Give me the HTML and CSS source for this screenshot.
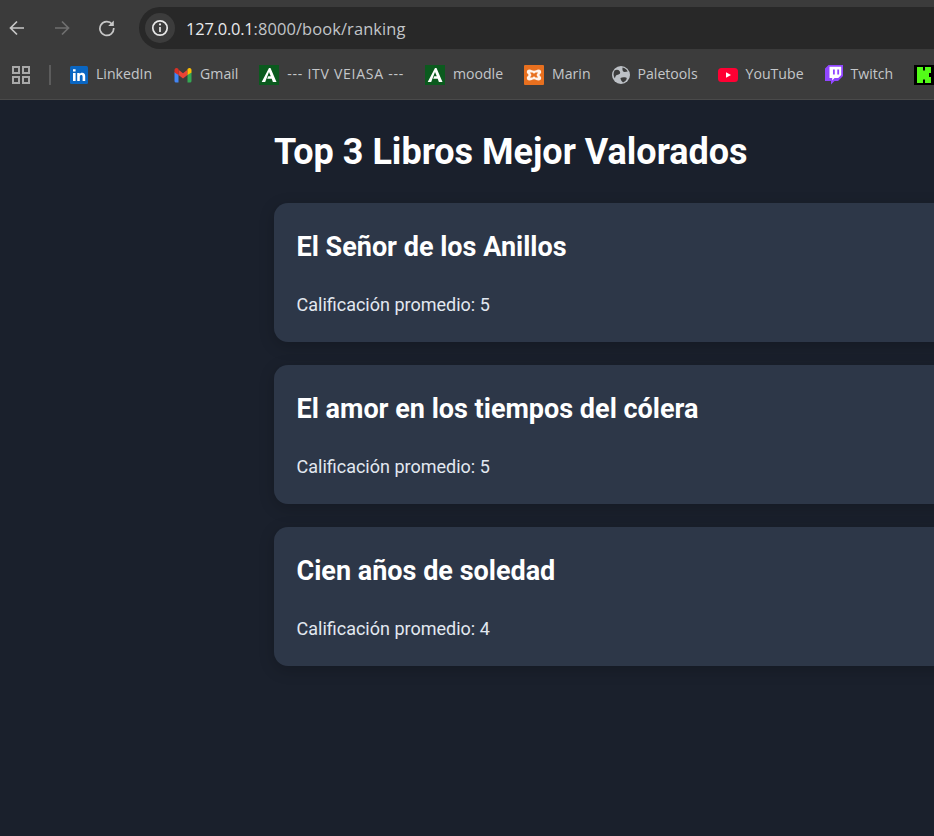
FILE: index.html
```html
<!DOCTYPE html>
<html lang="es">
<head>
<meta charset="utf-8">
<title>Top 3 Libros Mejor Valorados</title>
<link rel="stylesheet" href="styles.css">
</head>
<body>
<header class="chrome">
  <div class="toolbar">
    <svg class="nav-icon" viewBox="0 0 18 18"><path d="M16 9H3M9 2.500 2.500 9 9 15.500" class="stroke light"/></svg>
    <svg class="nav-icon dim" viewBox="0 0 18 18"><path d="M2 9h13M9 2.500 15.500 9 9 15.500" class="stroke muted"/></svg>
    <svg class="nav-icon reload" viewBox="0 0 18 18"><path d="M14.200 5.200A6.900 6.900 0 1 0 15.700 9" class="stroke light"/><path d="M15.800 1.400v5.600h-5.600z" class="fill-light"/></svg>
    <div class="omnibox">
      <span class="site-info"><svg viewBox="0 0 18 18" class="info"><circle cx="9" cy="9" r="7.200" class="stroke white"/><path d="M9 8v5" class="stroke white"/><circle cx="9" cy="5.400" r="1.100" class="fill-white"/></svg></span>
      <span class="url"><span class="host">127.0.0.1</span>:8000/book/ranking</span>
    </div>
  </div>
  <nav class="bookmarks">
    <svg class="apps" viewBox="0 0 18 18"><path d="M1 1h6v6H1zM11 1h6v6h-6zM1 11h6v6H1zM11 11h6v6h-6z" class="stroke apps-line"/></svg>
    <span class="divider"></span>
    <a class="bm bm-linkedin"><svg viewBox="0 0 18 18"><rect width="18" height="18" rx="1.500" fill="#0a66c2"/><path d="M3 7h2.600v8H3zM3 3.200h2.600v2.400H3zM7.200 7h2.500v1.100c.5-.8 1.400-1.300 2.500-1.300 2 0 3 1.200 3 3.400V15h-2.600v-4.300c0-1.100-.4-1.700-1.300-1.700s-1.500.6-1.500 1.700V15H7.200z" fill="#fff"/></svg><span class="bm-label">LinkedIn</span></a>
    <a class="bm bm-gmail"><svg viewBox="0 0 18 18"><path d="M.5 6 4.500 8v8.500H2a1.500 1.500 0 0 1-1.500-1.500z" fill="#4285f4"/><path d="M13.500 8l4-2v9a1.500 1.500 0 0 1-1.500 1.500h-2.500z" fill="#34a853"/><path d="M4.500 9V3.800L9 7.200l4.500-3.400V9L9 12.400z" fill="#ea4335"/><path d="M.5 6.500V4c0-1.700 1.900-2.600 3.200-1.600l.8.600V9z" fill="#d93025"/><path d="M13.500 9V3l.8-.6c1.300-1 3.200-.1 3.200 1.600v2.500z" fill="#fbbc04"/></svg><span class="bm-label">Gmail</span></a>
    <a class="bm bm-itv"><svg viewBox="0 0 20 20"><rect width="20" height="20" fill="#0b5a1e"/><path d="M10 3h1.500L17.500 17h-3.600l-1.200-3.200H8.200l1-2.500h2.600L10 7 6.200 17H2.700z" fill="#fff"/></svg><span class="bm-label">--- ITV VEIASA ---</span></a>
    <a class="bm bm-moodle"><svg viewBox="0 0 20 20"><rect width="20" height="20" fill="#0b5a1e"/><path d="M10 3h1.500L17.500 17h-3.600l-1.200-3.200H8.200l1-2.500h2.600L10 7 6.200 17H2.700z" fill="#fff"/></svg><span class="bm-label">moodle</span></a>
    <a class="bm bm-marin"><svg viewBox="0 0 20 20"><rect width="20" height="20" rx="1" fill="#e8701f"/><path d="M5.500 4.500c2 0 2.500 1.300 4.500 1.300s2.500-1.300 4.500-1.300 2.700 1.300 2.700 2.700-1.700 1.700-1.700 2.800 1.700 1.400 1.700 2.800-.7 2.700-2.700 2.700-2.500-1.300-4.500-1.300-2.500 1.300-4.500 1.300-2.700-1.300-2.700-2.700 1.700-1.700 1.700-2.800-1.700-1.400-1.700-2.800.7-2.700 2.700-2.700z" fill="#fff3ea"/><path d="M6 7.500h2.500L10 8.700l1.500-1.200H14l-1.500 2.500 1.500 2.500h-2.500L10 11.300l-1.500 1.200H6l1.500-2.500z" fill="#e8701f"/></svg><span class="bm-label">Marin</span></a>
    <a class="bm bm-pale"><svg viewBox="0 0 18 18"><circle cx="9" cy="9" r="9" fill="#bdc1c6"/><path d="M2.500 4.500C4.500 3.500 6.500 3.700 7.500 5s1 2.500-.5 3.300-3 .7-3.500 2.200-.3 1.500-.8 1.800A8.200 8.200 0 0 1 2.500 4.500zM10.500 1.500c2.500.5 4.300 2 5.200 4l-3 .5c-1.500 0-2.700-1.500-2.200-4.500zM8.500 12c1.500-1 3.800-1 5.500-.5s.3 3.300-2.300 4.700c-1.500.5-3.200-2.500-3.200-4.200z" fill="#3c3c3c"/></svg><span class="bm-label">Paletools</span></a>
    <a class="bm bm-yt"><svg viewBox="0 0 20 14"><rect width="20" height="14" rx="3.500" fill="#ff0033"/><path d="M8 4.200 13 7l-5 2.800z" fill="#fff"/></svg><span class="bm-label">YouTube</span></a>
    <a class="bm bm-twitch"><svg viewBox="0 0 18 20"><path d="M3.500 0H18v11l-5 5h-3.500L6 19.500V16H0V3.500z" fill="#9146ff"/><path d="M4.500 1.800h11.700v8.300l-3 3H9.500l-2.300 2.300v-2.300h-2.700z" fill="#fff"/><path d="M8 4.500h1.800v5H8zM12.300 4.500h1.800v5h-1.800z" fill="#9146ff"/></svg><span class="bm-label">Twitch</span></a>
    <a class="bm bm-kick"><svg viewBox="0 0 20 20"><rect width="20" height="20" fill="#000"/><path d="M3 2h6v3.500h2V2h6v6h-2v4h2v6h-6v-3.500H9V18H3z" fill="#53fc18"/></svg></a>
  </nav>
</header>
<main class="page">
  <h1 class="title">Top 3 Libros Mejor Valorados</h1>
  <article class="card">
    <h2 class="card-title">El Señor de los Anillos</h2>
    <p class="card-text">Calificación promedio: 5</p>
  </article>
  <article class="card">
    <h2 class="card-title">El amor en los tiempos del cólera</h2>
    <p class="card-text">Calificación promedio: 5</p>
  </article>
  <article class="card">
    <h2 class="card-title">Cien años de soledad</h2>
    <p class="card-text">Calificación promedio: 4</p>
  </article>
</main>
</body>
</html>
```
FILE: styles.css
```css
html, body {
  margin: 0;
  height: 100%;
  overflow: hidden;
}
body {
  background: #1a202c;
  font-family: Roboto, sans-serif;
  display: flex;
  flex-direction: column;
}
.chrome {
  background: #3c3c3c;
  flex: none;
  border-bottom: 1px solid #4a4a4a;
}
.toolbar {
  height: 50px;
  display: flex;
  align-items: center;
  padding: 6px 0 0 8px;
  box-sizing: border-box;
  background: #3b3b3b;
}
.nav-icon {
  width: 18px;
  height: 18px;
  flex: none;
  margin-right: 27px;
}
.nav-icon.reload {
  margin-right: 23px;
}
.stroke {
  fill: none;
  stroke-width: 1.700;
}
.light { stroke: #c7c7c7; }
.muted { stroke: #6f6f6f; }
.white { stroke: #e8e8e8; }
.apps-line { stroke: #a9a9a9; stroke-width: 2; }
.fill-light { fill: #c7c7c7; }
.fill-white { fill: #e8e8e8; }
.omnibox {
  flex: 1;
  height: 42px;
  background: #282828;
  border-radius: 21px 0 0 21px;
  display: flex;
  align-items: center;
  padding-left: 6px;
  margin-right: -40px;
}
.site-info {
  width: 30px;
  height: 30px;
  border-radius: 50%;
  background: #3c3c3c;
  display: flex;
  align-items: center;
  justify-content: center;
  margin-right: 11px;
}
.info {
  width: 18px;
  height: 18px;
}
.url {
  font-family: "Open Sans", sans-serif;
  font-size: 16.450px;
  letter-spacing: .1px;
  color: #c2c5c8;
  white-space: nowrap;
}
.host {
  color: #e8eaed;
  letter-spacing: -.2px;
}
.bookmarks {
  height: 49px;
  display: flex;
  align-items: center;
  padding-left: 12px;
  white-space: nowrap;
}
.apps {
  width: 18px;
  height: 18px;
  flex: none;
}
.divider {
  width: 2px;
  height: 20px;
  background: #5c5c5c;
  margin: 0 19px 0 19px;
  flex: none;
}
.bm {
  display: flex;
  align-items: center;
  gap: 8px;
  flex: none;
  font-family: "Open Sans", sans-serif;
  font-size: 14.100px;
  color: #c4c7ca;
  margin-right: 21px;
}
.bm-label {
  padding-bottom: 2px;
}
.bm-linkedin {
  margin-right: 22px;
}
.bm-pale {
  margin-right: 20px;
}
.bm-itv {
  letter-spacing: .7px;
}
.bm svg {
  width: 18px;
  height: 18px;
  flex: none;
}
.bm-itv svg, .bm-moodle svg, .bm-marin svg, .bm-kick svg {
  width: 20px;
  height: 20px;
}
.bm-yt svg {
  width: 20px;
  height: 14px;
}
.bm-twitch svg {
  width: 18px;
  height: 20px;
}
.page {
  padding: 32px 0 0 274px;
  width: 896px;
}
.title {
  margin: 0 0 31px;
  font-size: 36px;
  line-height: 40px;
  font-weight: 700;
  color: #fff;
}
.card {
  width: 896px;
  box-sizing: border-box;
  height: 139px;
  margin-bottom: 23px;
  padding: 24px 23px 23px 22.500px;
  background: #2d3748;
  border-radius: 14px;
  box-shadow: 0 4px 16px rgba(0, 0, 0, .2);
}
.card-title {
  margin: 0 0 24px;
  font-size: 27px;
  line-height: 40px;
  font-weight: 700;
  color: #fff;
}
.card-text {
  margin: 0;
  font-size: 18px;
  line-height: 28px;
  color: #e2e8f0;
}
```
